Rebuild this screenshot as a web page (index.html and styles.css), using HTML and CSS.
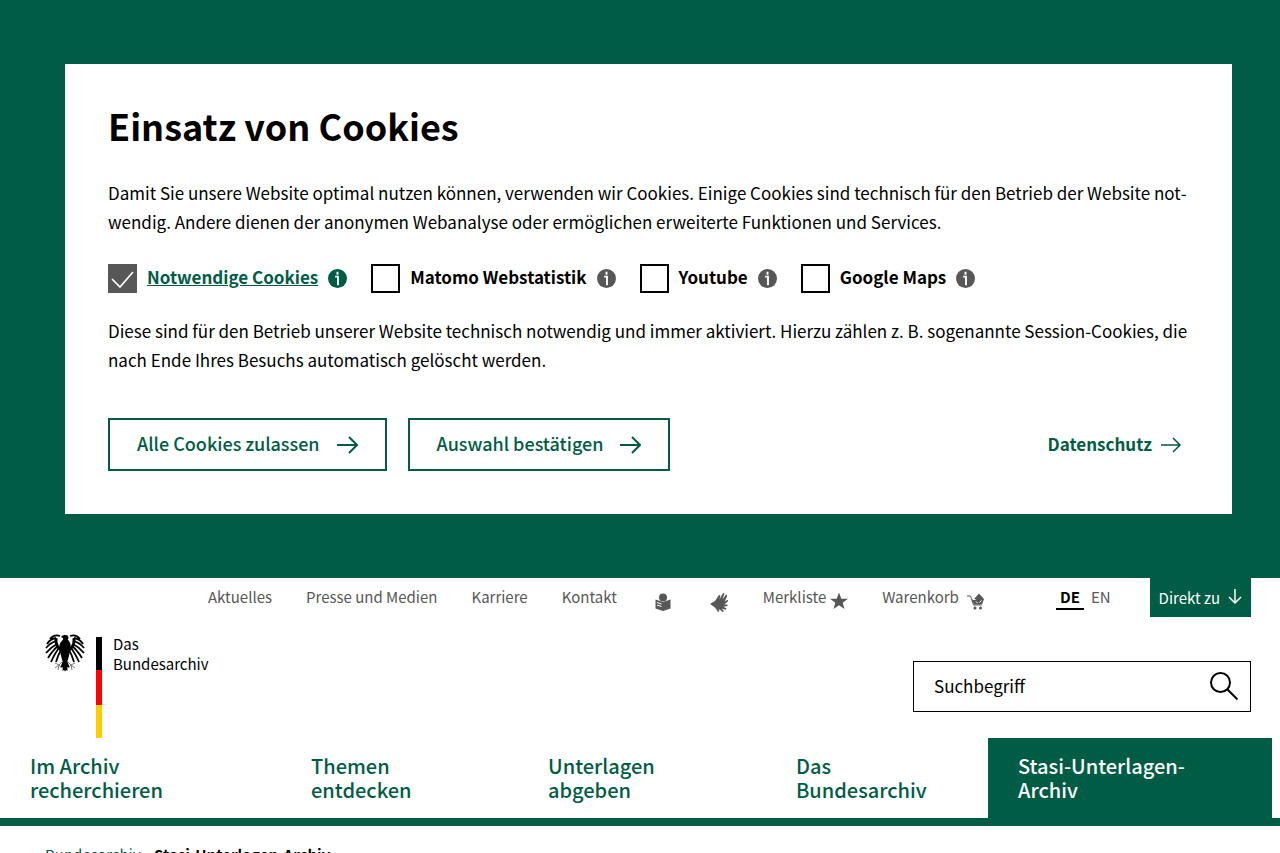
FILE: index.html
```
<!DOCTYPE html>
<html lang="de">

<head>
    <meta charset="UTF-8">
    <meta name="viewport" content="width=device-width, initial-scale=1.0">
    <title>Stasi-Unterlagen-Archiv</title>
    <link rel="stylesheet" href="styles.css">
</head>

<body>
    <section class="cookies">
        <form class="cookie-box">
            <h1>Einsatz von Cookies</h1>
            <p>Damit Sie unsere Website optimal nutzen können, verwenden wir Cookies. Einige Cookies sind technisch für den Betrieb der Website not&shy;wendig. Andere dienen der anonymen Webanalyse oder ermöglichen erweiterte Funktionen und Services.</p>
            <div class="options">
                <div class="option active">
                    <input type="checkbox" id="needed" checked>
                    <label for="needed">Notwendige Cookies</label>
                    <button type="button" class="info" aria-label="Info Notwendige Cookies">
                        <svg viewBox="0 0 20 20"><circle cx="10" cy="10" r="10"/><path d="M7.500 8h3v9M10 3v3"/></svg>
                    </button>
                </div>
                <div class="option">
                    <input type="checkbox" id="matomo">
                    <label for="matomo">Matomo Webstatistik</label>
                    <button type="button" class="info" aria-label="Info Matomo">
                        <svg viewBox="0 0 20 20"><circle cx="10" cy="10" r="10"/><path d="M7.500 8h3v9M10 3v3"/></svg>
                    </button>
                </div>
                <div class="option">
                    <input type="checkbox" id="youtube">
                    <label for="youtube">Youtube</label>
                    <button type="button" class="info" aria-label="Info Youtube">
                        <svg viewBox="0 0 20 20"><circle cx="10" cy="10" r="10"/><path d="M7.500 8h3v9M10 3v3"/></svg>
                    </button>
                </div>
                <div class="option">
                    <input type="checkbox" id="maps">
                    <label for="maps">Google Maps</label>
                    <button type="button" class="info" aria-label="Info Google Maps">
                        <svg viewBox="0 0 20 20"><circle cx="10" cy="10" r="10"/><path d="M7.500 8h3v9M10 3v3"/></svg>
                    </button>
                </div>
            </div>
            <p>Diese sind für den Betrieb unserer Website technisch notwendig und immer aktiviert. Hierzu zählen z. B. sogenannte Session-Cookies, die nach Ende Ihres Besuchs automatisch gelöscht werden.</p>
            <div class="actions">
                <button type="button" class="btn"><span>Alle Cookies zulassen</span>
                    <svg class="arrow" viewBox="0 0 22 20"><path d="M1 10h20M13 2l8 8-8 8"/></svg>
                </button>
                <button type="button" class="btn"><span>Auswahl bestätigen</span>
                    <svg class="arrow" viewBox="0 0 22 20"><path d="M1 10h20M13 2l8 8-8 8"/></svg>
                </button>
                <a href="#" class="privacy"><span>Datenschutz</span>
                    <svg class="arrow thin" viewBox="0 0 22 20"><path d="M1 10h19M13 3l7 7-7 7"/></svg>
                </a>
            </div>
        </form>
    </section>

    <header>
        <nav class="meta">
            <a href="#">Aktuelles</a>
            <a href="#">Presse und Medien</a>
            <a href="#">Karriere</a>
            <a href="#">Kontakt</a>
            <a href="#" class="symbol" aria-label="Leichte Sprache">
                <svg viewBox="0 0 18 20" width="18" height="20"><circle cx="9" cy="5.500" r="4"/><path d="M1.500 7.500 9 10l7.500-2.500v9L9 19l-7.500-2.500z"/><path class="cut" d="M3 10.500l4.500 1.500M3 13l4.500 1.500"/></svg>
            </a>
            <a href="#" class="symbol" aria-label="Gebärdensprache">
                <svg viewBox="0 0 20 22" width="20" height="22"><path d="M1 13l5-3 4-6 1.500.5-1 4L14 2l1.500.6-2 6L17 3.500l1.300 1-2.500 6 2.700-1.800.8 1.200-4 3.700 3.200-.2v1.500l-4 .8 3 1.800-.8 1.200-4-1 2.300 2.500-1.200.9-4-3.200.6 2.600-1.400.2L6 16.500z"/></svg>
            </a>
            <a href="#" class="saved">Merkliste
                <svg viewBox="0 0 18 18" width="18" height="18"><path d="M9 .5l2.300 6.200H18l-5.300 4L14.500 17 9 13.200 3.500 17l1.800-6.300L0 6.700h6.700z"/></svg>
            </a>
            <a href="#" class="basket">Warenkorb
                <svg viewBox="0 0 18 18" width="18" height="18"><path class="line" d="M0 4h3.500l3 9h8"/><path d="M4.500 7h2.500l5-5.500L17 7l-2 5.500H7z"/><path class="cut" d="M5.500 7.500l3 0M9 9.500l1.500 1.500M12.500 10.500l2-2"/><circle cx="8" cy="16" r="1.500"/><circle cx="13.500" cy="16" r="1.500"/></svg>
            </a>
            <span class="lang"><b>DE</b><a href="#">EN</a></span>
            <button type="button" class="direct">Direkt zu
                <svg viewBox="0 0 14 16" width="14" height="16"><path d="M7 1v14M1 9l6 6 6-6"/></svg>
            </button>
        </nav>

        <div class="top">
            <a href="#" class="logo">
                <svg class="eagle" viewBox="0 0 40 38" width="40" height="38">
                    <path d="M16 3q1.500-2.500 4.500-2 3 0 3 3l-.7 1.500q3 3 3 8l-2 9q-.7 3-1.500 5l2.500 6-2.500-.5.2 4-1.500-1-1 1.500-1-1.500-1.500 1 .2-4-2.500.5 2.500-6q-.8-2-1.500-5l-2-9q0-5 4-8l-.2-1.500z"/>
                    <g class="wing">
                        <path class="arm" d="M17 17Q10 12 11 4"/>
                        <path class="arm" d="M23 17Q30 12 29 4"/>
                        <path d="M15 2Q9 0 5 5M11 4Q5 5 2 10M11 7Q5 9 1 14M12 10Q6 13 1 19M13 12Q8 16 3 24M14 14Q10 19 6 28M16 16Q13 21 11 28"/>
                        <path d="M25 2Q31 0 35 5M29 4Q35 5 38 10M29 7Q35 9 39 14M28 10Q34 13 39 19M27 12Q32 16 37 24M26 14Q30 19 34 28M24 16Q27 21 29 28"/>
                    </g>
                    <path class="claw" d="M18 27l-4 4-4-2M14 31l-4 3M14 31l-1 5M14 31l3 3M22 27l4 4 4-2M26 31l4 3M26 31l1 5M26 31l-3 3"/>
                </svg>
                <span class="flag"></span>
                <span class="name">Das<br>Bundesarchiv</span>
            </a>
            <form class="search">
                <input type="text" placeholder="Suchbegriff" aria-label="Suchbegriff">
                <button type="button" aria-label="Suchen">
                    <svg viewBox="0 0 30 30" width="30" height="30"><circle cx="11.500" cy="11.500" r="9.500"/><path d="M18.500 18.500l10 10"/></svg>
                </button>
            </form>
        </div>

        <nav class="main-nav">
            <a href="#">Im Archiv<br>recherchieren</a>
            <a href="#">Themen<br>entdecken</a>
            <a href="#">Unterlagen<br>abgeben</a>
            <a href="#">Das<br>Bundesarchiv</a>
            <a href="#" class="current">Stasi-Unterlagen-<br>Archiv</a>
        </nav>
    </header>

    <div class="breadcrumb"><a href="#">Bundesarchiv</a><span>›</span><b>Stasi-Unterlagen-Archiv</b></div>
</body>

</html>
```

FILE: styles.css
```
* {
    margin: 0;
    padding: 0;
    box-sizing: border-box;
}

html {
    overflow: hidden;
}

body {
    font-family: "Noto Sans CJK SC", "Noto Sans", sans-serif;
    font-size: 17px;
    line-height: 29px;
    color: #000;
    background-color: #fff;
    hyphenate-character: "-";
}

a {
    color: inherit;
    text-decoration: none;
}

button,
input {
    font: inherit;
    color: inherit;
}

button {
    border: none;
    background: none;
    cursor: pointer;
}

svg {
    display: block;
    flex: none;
}

.cookies {
    background-color: #005c45;
    padding: 64px 48px 64px 65px;
}

.cookie-box {
    background-color: #fff;
    padding: 43px 40px 43px 43px;
}

h1 {
    font-size: 36px;
    line-height: 36px;
    margin-bottom: 35px;
}

.options {
    display: flex;
    flex-wrap: wrap;
    gap: 24px;
    margin: 28px 0 23px;
}

.option {
    display: flex;
    align-items: center;
    gap: 10px;
    font-weight: bold;
}

.option input {
    appearance: none;
    width: 29px;
    height: 29px;
    border: 2px solid #000;
}

.option input:checked {
    border-color: #575757;
    background: #575757 url("data:image/svg+xml,%3Csvg xmlns='http://www.w3.org/2000/svg' viewBox='0 0 25 25'%3E%3Cpath d='M2 13l8 8L23 6' fill='none' stroke='white' stroke-width='1.700'/%3E%3C/svg%3E");
}

.option label {
    line-height: 25px;
    padding-bottom: 4px;
}

.option.active label {
    color: #005c45;
    text-decoration: underline;
}

.info svg {
    width: 19px;
    height: 19px;
    fill: #575757;
}

.active .info svg {
    fill: #005c45;
}

.info path {
    fill: none;
    stroke: #fff;
    stroke-width: 2;
}

.actions {
    display: flex;
    align-items: center;
    gap: 21px;
    margin-top: 44px;
    color: #005c45;
}

.actions span {
    padding-bottom: 3px;
}

.btn {
    display: flex;
    align-items: center;
    gap: 16px;
    height: 53px;
    padding: 0 27px;
    border: 2px solid #005c45;
    font-size: 18px;
    font-weight: 500;
}

.arrow {
    width: 22px;
    height: 20px;
    fill: none;
    stroke: #005c45;
    stroke-width: 2;
}

.privacy {
    display: flex;
    align-items: center;
    gap: 8px;
    margin-left: auto;
    margin-right: 10px;
    font-weight: bold;
}

.thin {
    stroke-width: 1.5;
}

.meta {
    display: flex;
    align-items: flex-start;
    gap: 34px;
    padding: 0 29px 0 208px;
    height: 39px;
    font-size: 15px;
    line-height: 38px;
    color: #575757;
}

.meta a {
    display: flex;
    align-items: center;
    height: 38px;
}

.meta svg {
    fill: #575757;
}

.meta .cut,
.meta .line {
    fill: none;
    stroke: #fff;
    stroke-width: 1;
}

.meta .line {
    stroke: #575757;
}

.meta .symbol {
    height: 48px;
    margin-left: 3px;
}

.saved svg,
.basket svg {
    margin-top: 7px;
}

.saved {
    gap: 4px;
}

.basket {
    gap: 8px;
}

.lang {
    display: flex;
    gap: 7px;
    margin: 0 5px 0 auto;
}

.lang b {
    height: 32px;
    padding: 0 4px;
    border-bottom: 2px solid #000;
    color: #000;
}

.meta .direct {
    display: flex;
    align-items: center;
    gap: 8px;
    height: 39px;
    padding: 0 9px;
    background-color: #005c45;
    color: #fff;
}

.meta .direct svg {
    fill: none;
    stroke: #fff;
    stroke-width: 1.5;
    margin-bottom: 4px;
}

.top {
    display: flex;
    justify-content: space-between;
    align-items: flex-start;
    padding: 17px 29px 0 45px;
}

.logo {
    display: flex;
    align-items: flex-start;
}

.eagle .wing,
.eagle .claw {
    fill: none;
    stroke: #000;
    stroke-width: 1.8;
}

.eagle .arm {
    stroke-width: 3;
}

.eagle .claw {
    stroke: #777;
    stroke-width: 1;
}

.flag {
    width: 6px;
    height: 101px;
    margin: 3px 11px 0;
    background: linear-gradient(#000 33%, #f00 33% 67%, #fc0 67%);
}

.name {
    font-size: 15px;
    line-height: 20px;
}

.search {
    display: flex;
    align-items: center;
    justify-content: space-between;
    width: 338px;
    height: 51px;
    margin-top: 27px;
    padding: 0 11px 2px 20px;
    border: 1px solid #000;
}

.search input {
    flex: 1;
    min-width: 0;
    border: none;
    outline: none;
}

.search input::placeholder {
    color: #000;
}

.search svg {
    fill: none;
    stroke: #000;
    stroke-width: 2;
}

.main-nav {
    display: grid;
    grid-template-columns: 281fr 237fr 248fr 222fr 284fr;
    padding-right: 8px;
    border-bottom: 8px solid #005c45;
    font-size: 20px;
    line-height: 24px;
    font-weight: 500;
    color: #005c45;
}

.main-nav a {
    padding: 16px 0 16px 30px;
}

.main-nav .current {
    background-color: #005c45;
    color: #fff;
}

.breadcrumb {
    padding: 14px 45px;
    font-size: 15px;
}

.breadcrumb a,
.breadcrumb span {
    color: #005c45;
}

.breadcrumb span {
    padding: 0 6px 0 3px;
}
```
